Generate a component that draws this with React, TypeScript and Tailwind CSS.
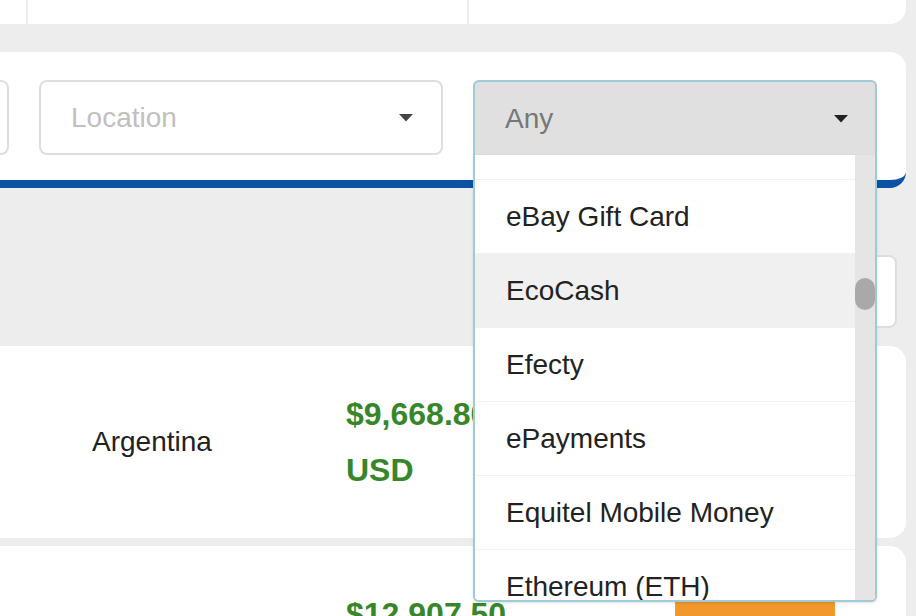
import React from 'react';

const methods = [
  'eBay Gift Card',
  'EcoCash',
  'Efecty',
  'ePayments',
  'Equitel Mobile Money',
  'Ethereum (ETH)',
];

function Caret({ className }: { className: string }) {
  return (
    <svg width="14" height="8" viewBox="0 0 14 8" className={className}>
      <path d="M0 0 H14 L7 7.5 Z" fill="currentColor" />
    </svg>
  );
}

export default function App() {
  return (
    <div
      className="h-[616px] w-[916px] overflow-hidden bg-[#ededed] pr-[10px]"
      style={{ fontFamily: '"Liberation Sans", Arial, sans-serif' }}
    >
      {/* Top summary card */}
      <div className="flex h-[24px] rounded-br-2xl bg-white">
        <div className="w-[28px] border-r-2 border-[#eeeeee]" />
        <div className="w-[441px] border-r-2 border-[#eeeeee]" />
        <div className="flex-1" />
      </div>

      {/* Filter card */}
      <div className="mt-[28px] rounded-r-2xl border-b-8 border-[#0b53a2] bg-white pt-[28px] pb-[25px]">
        <div className="flex h-[75px] gap-[30px]">
          <div className="w-[9px] rounded-r-lg border-2 border-l-0 border-[#dedede]" />
          <div className="flex w-[404px] items-center justify-between rounded-lg border-2 border-[#dedede] pl-[30px] pr-[28px]">
            <span className="text-[28px] text-[#c0c0c0]">Location</span>
            <Caret className="text-[#444444]" />
          </div>
          <div className="relative z-10 w-[404px]">
            <div className="flex h-full items-center justify-between rounded-t-md border-2 border-b-0 border-[#9fcbd7] bg-[#e0e0e0] pl-[30px] pr-[27px]">
              <span className="text-[28px] text-[#777777]">Any</span>
              <Caret className="text-[#222222]" />
            </div>
            {/* Open option list */}
            <div className="absolute top-full left-0 right-0 flex h-[447px] overflow-hidden rounded-b-md border-2 border-t-0 border-[#9fcbd7] bg-white shadow-sm">
              <div className="flex-1 overflow-hidden">
                <div className="h-[25px] border-b border-[#f2f2f2]" />
                <ul>
                  {methods.map((m) => (
                    <li
                      key={m}
                      className={
                        'flex h-[74px] items-center border-b border-[#f2f2f2] pl-[31px] text-[28px] text-[#222222] ' +
                        (m === 'EcoCash' ? 'bg-[#f0f0f0]' : 'bg-white')
                      }
                    >
                      {m}
                    </li>
                  ))}
                </ul>
              </div>
              <div className="w-[20px] bg-[#e5e5e5]">
                <div className="mt-[123px] h-[32px] w-[20px] rounded-full bg-[#a9a9a9]" />
              </div>
            </div>
          </div>
        </div>
      </div>

      {/* Table header area */}
      <div className="flex h-[158px] justify-end pt-[67px] pr-[9px]">
        <div className="h-[73px] w-[300px] rounded-r-lg border-2 border-[#dedede] bg-white" />
      </div>

      {/* Offer rows */}
      <div className="flex flex-col gap-[8px]">
        <div className="flex h-[192px] items-center rounded-r-2xl bg-white pl-[92px]">
          <div className="w-[254px] text-[28px] text-[#222222]">Argentina</div>
          <div className="w-[329px] text-[32px] font-bold leading-[56px] text-[#38862a]">
            <div>$9,668.80</div>
            <div>USD</div>
          </div>
          <div className="h-[56px] w-[160px] bg-[#f2972b]" />
        </div>
        <div className="flex h-[192px] items-start rounded-r-2xl bg-white pl-[92px] pt-[40px]">
          <div className="w-[254px]" />
          <div className="w-[329px] text-[32px] font-bold leading-[56px] text-[#38862a]">
            <div>$12,907.50</div>
            <div>USD</div>
          </div>
          <div className="mt-[15px] h-[56px] w-[160px] bg-[#f2972b]" />
        </div>
      </div>
    </div>
  );
}
